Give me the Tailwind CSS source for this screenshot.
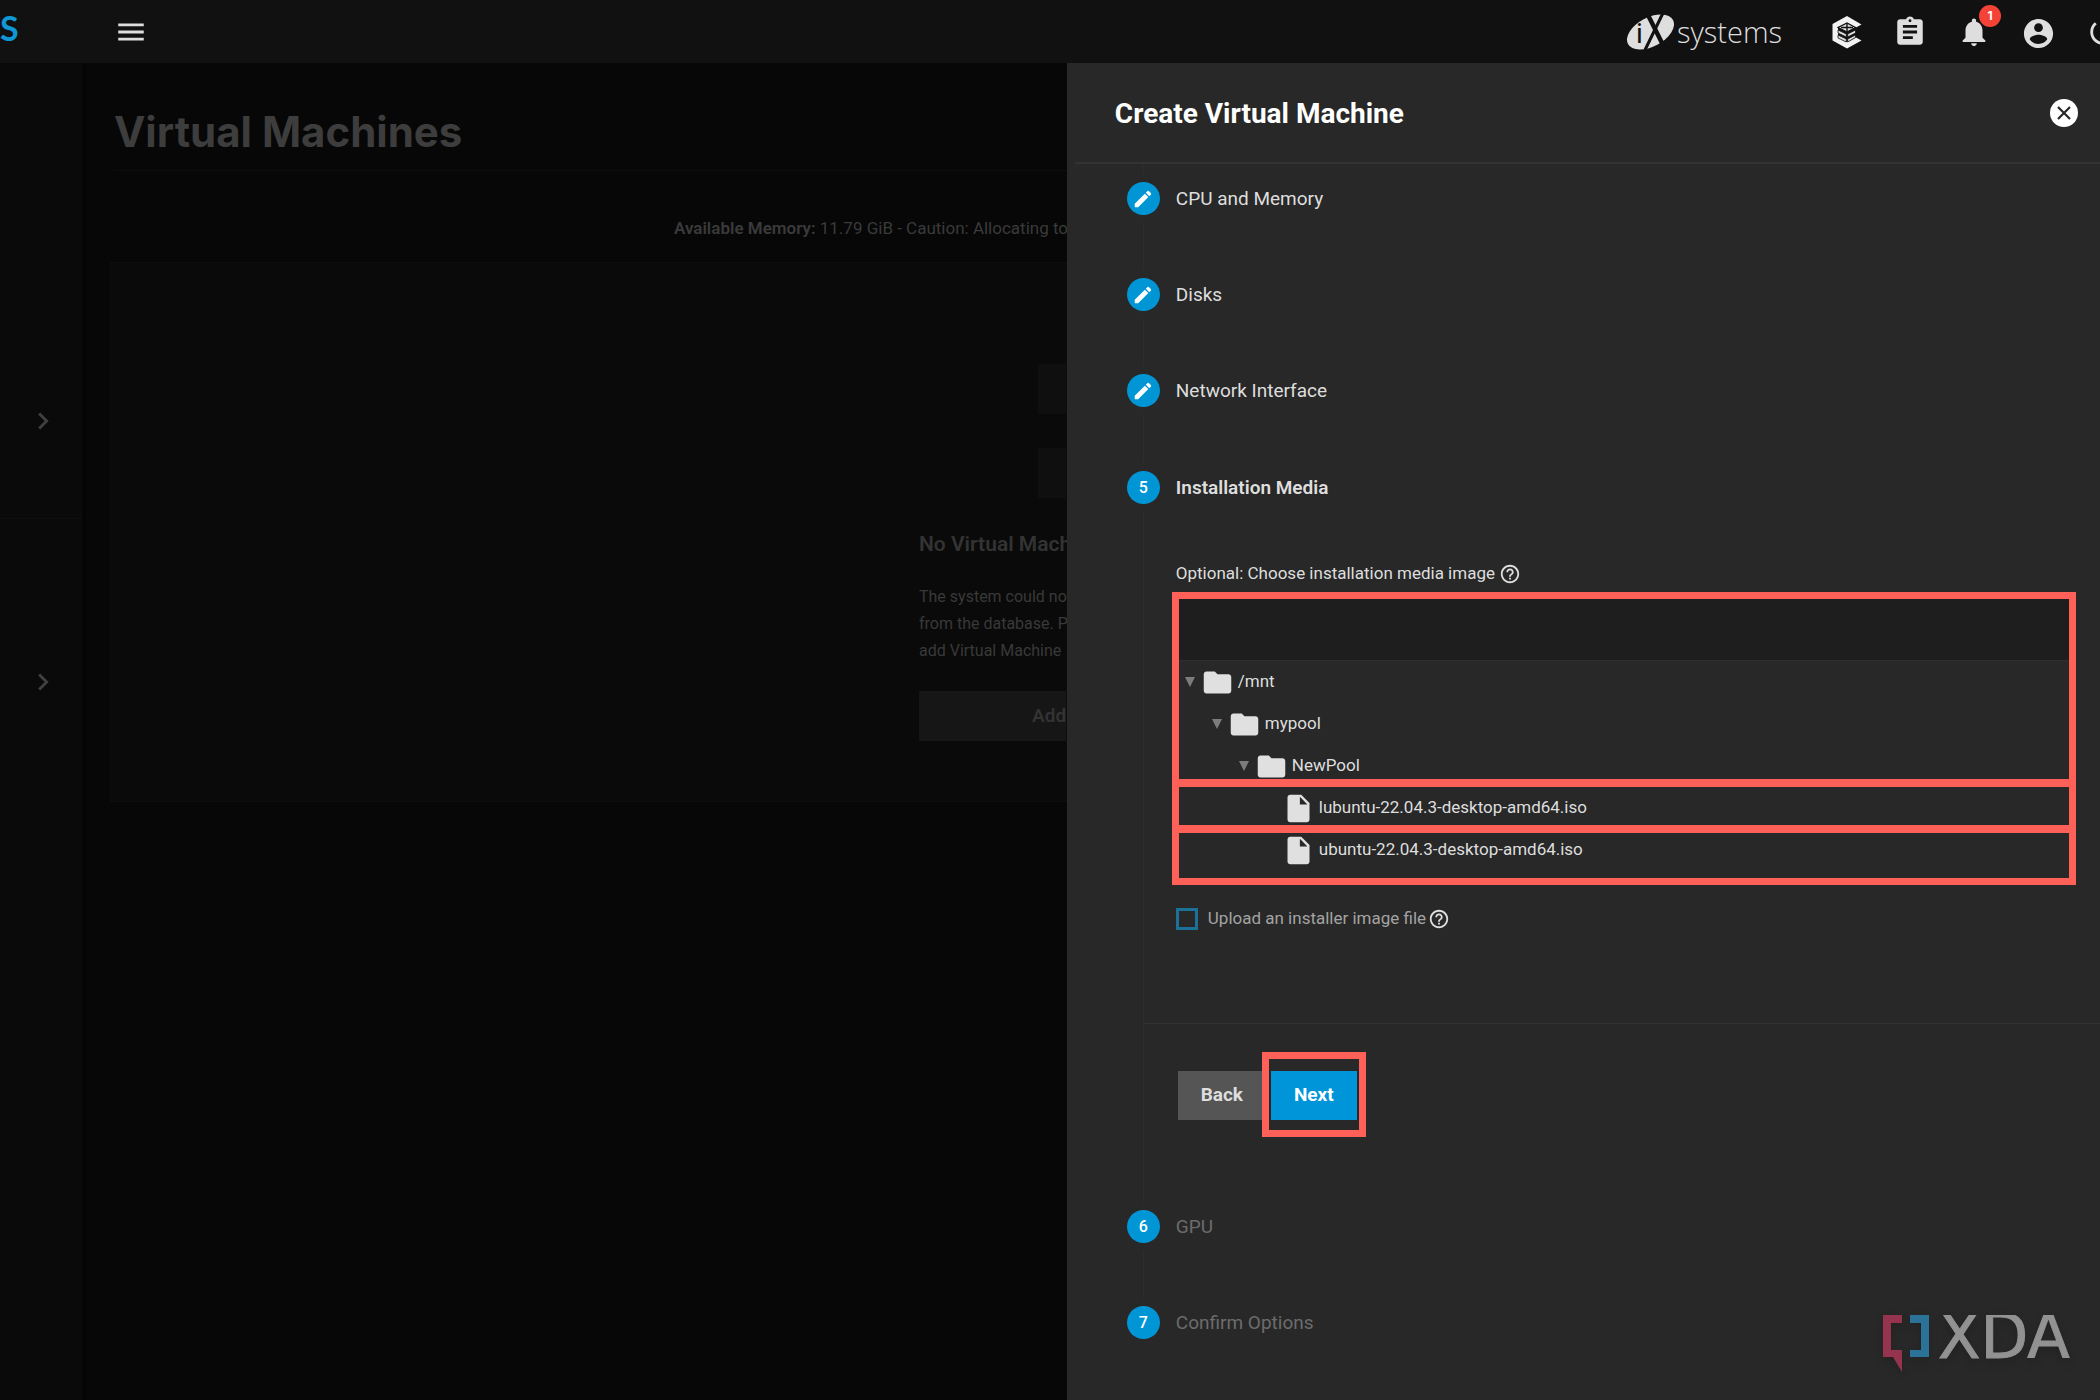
<!DOCTYPE html>
<html lang="en">
<head>
<meta charset="utf-8">
<title>Virtual Machines</title>
<meta name="viewport" content="width=device-width, initial-scale=1">
<script src="https://cdn.jsdelivr.net/npm/@tailwindcss/browser@4"></script>
</head>
<body class="flex min-h-screen flex-col overflow-x-hidden bg-[#070707] font-[Roboto,sans-serif] text-[17px] text-[#dedede]">

<!-- Top bar -->
<header class="flex h-[63px] items-center overflow-hidden bg-[#111111]">
  <a href="#" class="w-[114px] pb-2 font-[Lato,sans-serif] text-[34px] leading-none font-bold text-[#0f97d6]">S</a>
  <button type="button" aria-label="Toggle menu" class="text-[#dedede]">
    <svg class="size-[34px]" viewBox="0 0 24 24" fill="currentColor"><path d="M3 18h18v-2H3v2zm0-5h18v-2H3v2zm0-7v2h18V6H3z"/></svg>
  </button>
  <div class="-mr-5 ml-auto flex items-center gap-[30px] text-[#dedede]">
    <a href="#" aria-label="iXsystems" class="mr-4">
      <svg class="h-[44px] w-[160px]" viewBox="0 0 160 44">
        <ellipse cx="27.500" cy="22" rx="25.500" ry="14.500" transform="rotate(-28 27.500 22)" fill="#dedede"/>
        <text x="13" y="33" font-family="Roboto, sans-serif" font-size="28" fill="#111111">i</text>
        <path d="M24 3 L40 35" stroke="#111111" stroke-width="4.500" fill="none"/>
        <path d="M40 3 L22 40" stroke="#111111" stroke-width="3" fill="none"/>
        <text x="54" y="33" font-family="'Open Sans', sans-serif" font-weight="300" font-size="29" fill="#dedede">systems</text>
        <text x="155" y="20" font-family="Roboto, sans-serif" font-size="5" fill="#aaaaaa">™</text>
      </svg>
    </a>
    <button type="button" aria-label="TrueCommand">
      <svg class="size-[34px]" viewBox="0 0 34 34">
        <path d="M18 1 L32.500 9.500 L27 12.500 L18 8 L9 12 V22.500 L18 27 L27 22.500 L32.500 25.500 L18 33.500 L3.500 25.500 V9 Z" fill="#f2f2f2"/>
        <path d="M9 12.500 L18 8 L26.500 12.500 L18 17 Z" fill="#dedede" stroke="#111111" stroke-width="1.200"/>
        <path d="M18 8.500v8M12 12.500h12" stroke="#111111" stroke-width="1.400"/>
        <path d="M9 15 L17.300 19 V22 L9 18Z M9 20 L17.300 24 V27 L9 23Z M18.700 19 L26.500 15 V18 L18.700 22Z M18.700 24 L26.500 20 V22.500 L18.700 27Z" fill="#dedede" stroke="#111111" stroke-width=".8"/>
      </svg>
    </button>
    <button type="button" aria-label="Jobs">
      <svg class="size-[34px]" viewBox="0 0 24 24" fill="currentColor"><path d="M19 3h-4.180C14.400 1.840 13.300 1 12 1c-1.300 0-2.400.84-2.820 2H5c-1.100 0-2 .9-2 2v14c0 1.100.9 2 2 2h14c1.100 0 2-.9 2-2V5c0-1.100-.9-2-2-2zm-7 0c.55 0 1 .45 1 1s-.45 1-1 1-1-.45-1-1 .45-1 1-1zm2 14H7v-2h7v2zm3-4H7v-2h10v2zm0-4H7V7h10v2z"/></svg>
    </button>
    <button type="button" aria-label="Alerts" class="relative">
      <svg class="size-[34px]" viewBox="0 0 24 24" fill="currentColor"><path d="M12 22c1.100 0 2-.9 2-2h-4c0 1.100.89 2 2 2zm6-6v-5c0-3.070-1.640-5.640-4.500-6.320V4c0-.83-.67-1.500-1.500-1.500s-1.500.67-1.500 1.500v.68C7.630 5.360 6 7.920 6 11v5l-2 2v1h16v-1l-2-2z"/></svg>
      <span class="absolute -top-2.5 left-[22px] flex size-[22px] items-center justify-center rounded-full bg-[#f44336] font-[Inter,sans-serif] text-[12px] leading-none font-bold text-white">1</span>
    </button>
    <button type="button" aria-label="Account">
      <svg class="mt-1 size-[35px]" viewBox="0 0 24 24" fill="currentColor"><path d="M12 2C6.480 2 2 6.480 2 12s4.480 10 10 10 10-4.480 10-10S17.520 2 12 2zm0 3c1.660 0 3 1.340 3 3s-1.340 3-3 3-3-1.340-3-3 1.340-3 3-3zm0 14.200c-2.500 0-4.710-1.280-6-3.220.03-1.990 4-3.080 6-3.080 1.990 0 5.970 1.090 6 3.080-1.290 1.940-3.500 3.220-6 3.220z"/></svg>
    </button>
    <button type="button" aria-label="Power">
      <svg class="size-[34px]" viewBox="0 0 24 24" fill="currentColor"><path d="M13 3h-2v10h2V3zm4.830 2.170l-1.420 1.420C17.990 7.860 19 9.810 19 12c0 3.870-3.130 7-7 7s-7-3.130-7-7c0-2.190 1.010-4.140 2.580-5.420L6.170 5.170C4.230 6.820 3 9.260 3 12c0 4.970 4.030 9 9 9s9-4.030 9-9c0-2.740-1.230-5.180-3.170-6.830z"/></svg>
    </button>
  </div>
</header>

<div class="flex flex-1">
  <!-- Collapsed side navigation -->
  <nav aria-label="Main" class="w-[86px] shrink-0 border-r-4 border-[#050505] bg-[#0a0a0a] pt-[260px] text-[#404040]">
    <a href="#" aria-label="Expand section" class="flex h-[196px] items-center border-b border-[#0e0e0e] pl-[26px]">
      <svg class="size-[34px]" viewBox="0 0 24 24" fill="currentColor"><path d="M10 6L8.590 7.410 13.170 12l-4.580 4.590L10 18l6-6z"/></svg>
    </a>
    <a href="#" aria-label="Section" class="block h-[67px] border-b border-[#0c0c0c]"></a>
    <a href="#" aria-label="Section" class="block h-[64px] border-b border-[#0c0c0c]"></a>
    <a href="#" aria-label="Expand section" class="flex h-[64px] items-center pl-[26px]">
      <svg class="size-[34px]" viewBox="0 0 24 24" fill="currentColor"><path d="M10 6L8.590 7.410 13.170 12l-4.580 4.590L10 18l6-6z"/></svg>
    </a>
  </nav>

  <!-- Dimmed page behind the panel -->
  <main class="min-w-0 flex-1 overflow-hidden pl-6 whitespace-nowrap text-[#3a3a3a]">
    <h1 class="ml-1 h-[108px] border-b border-[#0d0d0d] pt-10 font-[Inter,sans-serif] text-[42px] leading-[58px] font-bold text-[#3d3d3d]">Virtual Machines</h1>
    <p class="mt-[45px] pl-[564px] leading-6"><b class="font-semibold">Available Memory:</b> 11.79 GiB - Caution: Allocating too</p>
    <section class="mt-[22px] flex h-[540px] flex-col border border-[#0d0d0d] bg-[#0a0a0a] pt-[101px] pl-[808px]">
      <div class="ml-[119px] h-[50px] bg-[#0f0f0f]"></div>
      <div class="mt-[34px] ml-[119px] h-[50px] bg-[#0f0f0f]"></div>
      <h2 class="mt-8 text-[21px] leading-7 font-semibold text-[#333333]">No Virtual Mach</h2>
      <p class="mt-[25px] text-base leading-[27px] text-[#393939]">The system could no<br>from the database. P<br>add Virtual Machine</p>
      <button type="button" class="mt-[27px] h-[50px] bg-[#161616] pl-[113px] text-left text-[19px] font-semibold text-[#333333]">Add</button>
    </section>
  </main>

  <!-- Create form -->
  <aside aria-labelledby="panel-title" class="relative w-[49.2%] shrink-0 bg-[#282828]">
    <div class="flex h-[99px] items-center pr-[22px] pl-12">
      <h2 id="panel-title" class="pt-0.5 text-[28px] leading-9 font-bold text-white">Create Virtual Machine</h2>
      <button type="button" aria-label="Close" class="ml-auto flex size-7 items-center justify-center rounded-full bg-white">
        <svg class="size-4" viewBox="0 0 16 16" fill="none" stroke="#282828" stroke-width="2.200"><path d="M2 2l12 12M14 2L2 14"/></svg>
      </button>
    </div>
    <form class="ml-2 border-t-2 border-[#333333]">
      <ol class="pl-[52px] text-[19px]">
        <li aria-hidden="true" class="mb-2 ml-4 h-[10px] w-px bg-[#2d2d2d]"></li>
        <li class="flex h-24 gap-4">
          <div class="flex w-[33px] flex-col items-center">
            <span class="flex size-[33px] shrink-0 items-center justify-center rounded-full bg-[#0095d5] text-white"><svg class="size-[22px]" viewBox="0 0 24 24" fill="currentColor"><path d="M3 17.250V21h3.750L17.810 9.940l-3.750-3.750L3 17.250zM20.710 7.040c.39-.39.39-1.020 0-1.410l-2.340-2.340c-.39-.39-1.020-.39-1.410 0l-1.830 1.830 3.750 3.750 1.830-1.830z"/></svg></span>
            <span class="my-2 w-px flex-1 bg-[#2d2d2d]"></span>
          </div>
          <h3 class="leading-[33px]">CPU and Memory</h3>
        </li>
        <li class="flex h-24 gap-4">
          <div class="flex w-[33px] flex-col items-center">
            <span class="flex size-[33px] shrink-0 items-center justify-center rounded-full bg-[#0095d5] text-white"><svg class="size-[22px]" viewBox="0 0 24 24" fill="currentColor"><path d="M3 17.250V21h3.750L17.810 9.940l-3.750-3.750L3 17.250zM20.710 7.040c.39-.39.39-1.020 0-1.410l-2.340-2.340c-.39-.39-1.020-.39-1.410 0l-1.830 1.830 3.750 3.750 1.830-1.830z"/></svg></span>
            <span class="my-2 w-px flex-1 bg-[#2d2d2d]"></span>
          </div>
          <h3 class="leading-[33px]">Disks</h3>
        </li>
        <li class="flex h-[97px] gap-4">
          <div class="flex w-[33px] flex-col items-center">
            <span class="flex size-[33px] shrink-0 items-center justify-center rounded-full bg-[#0095d5] text-white"><svg class="size-[22px]" viewBox="0 0 24 24" fill="currentColor"><path d="M3 17.250V21h3.750L17.810 9.940l-3.750-3.750L3 17.250zM20.710 7.040c.39-.39.39-1.020 0-1.410l-2.340-2.340c-.39-.39-1.020-.39-1.410 0l-1.830 1.830 3.750 3.750 1.830-1.830z"/></svg></span>
            <span class="my-2 w-px flex-1 bg-[#2d2d2d]"></span>
          </div>
          <h3 class="leading-[33px]">Network Interface</h3>
        </li>
        <li class="flex gap-4">
          <div class="flex w-[33px] flex-col items-center">
            <span class="flex size-[33px] shrink-0 items-center justify-center rounded-full bg-[#0095d5] text-base font-medium text-white">5</span>
            <span class="my-2 w-px flex-1 bg-[#2d2d2d]"></span>
          </div>
          <div class="min-w-0 flex-1 pb-[90px] text-[17px]">
            <h3 class="text-[19px] leading-[33px] font-semibold">Installation Media</h3>
            <div class="mt-[58px] flex h-6 items-center gap-1">
              <label for="media">Optional: Choose installation media image</label>
              <svg class="size-[22px]" viewBox="0 0 24 24" fill="currentColor"><path d="M11 18h2v-2h-2v2zm1-16C6.480 2 2 6.480 2 12s4.480 10 10 10 10-4.480 10-10S17.520 2 12 2zm0 18c-4.410 0-8-3.590-8-8s3.590-8 8-8 8 3.590 8 8-3.590 8-8 8zm0-14c-2.210 0-4 1.790-4 4h2c0-1.100.9-2 2-2s2 .9 2 2c0 2-3 1.750-3 5h2c0-2.250 3-2.500 3-5 0-2.210-1.790-4-4-4z"/></svg>
            </div>
            <div class="mt-1.5 mr-6 -ml-1 border-[7px] border-[#ff6057]">
              <input id="media" type="text" class="block h-[61px] w-full bg-[#1e1e1e] px-3 outline-none">
              <ul class="border-t border-[#2e2e2e] pb-[7px]">
                <li class="flex h-[42px] items-center pl-1.5">
                  <svg class="mr-1.5 size-2.5" viewBox="0 0 10 10" fill="#7c7c7c"><path d="M0 0h10L5 10z"/></svg>
                  <svg class="mr-1 size-[33px]" viewBox="0 0 24 24" fill="#e0e0e0"><path d="M10 4H4c-1.100 0-2 .9-2 2v12c0 1.100.9 2 2 2h16c1.100 0 2-.9 2-2V8c0-1.100-.9-2-2-2h-8l-2-2z"/></svg>/mnt
                </li>
                <li class="flex h-[42px] items-center pl-[33px]">
                  <svg class="mr-1.5 size-2.5" viewBox="0 0 10 10" fill="#7c7c7c"><path d="M0 0h10L5 10z"/></svg>
                  <svg class="mr-1 size-[33px]" viewBox="0 0 24 24" fill="#e0e0e0"><path d="M10 4H4c-1.100 0-2 .9-2 2v12c0 1.100.9 2 2 2h16c1.100 0 2-.9 2-2V8c0-1.100-.9-2-2-2h-8l-2-2z"/></svg>mypool
                </li>
                <li class="flex h-[42px] items-center pl-[60px]">
                  <svg class="mr-1.5 size-2.5" viewBox="0 0 10 10" fill="#7c7c7c"><path d="M0 0h10L5 10z"/></svg>
                  <svg class="mr-1 size-[33px]" viewBox="0 0 24 24" fill="#e0e0e0"><path d="M10 4H4c-1.100 0-2 .9-2 2v12c0 1.100.9 2 2 2h16c1.100 0 2-.9 2-2V8c0-1.100-.9-2-2-2h-8l-2-2z"/></svg>NewPool
                </li>
                <li class="relative flex h-[42px] items-center pl-[103px]">
                  <span aria-hidden="true" class="absolute -inset-x-[7px] -top-2 -bottom-1 border-x-[7px] border-y-[8px] border-[#ff6057]"></span>
                  <svg class="mr-1 size-[33px]" viewBox="0 0 24 24" fill="#e0e0e0"><path d="M6 2c-1.100 0-1.990.9-1.990 2L4 20c0 1.100.89 2 1.990 2H18c1.100 0 2-.9 2-2V8l-6-6H6zm7 7V3.500L18.500 9H13z"/></svg>lubuntu-22.04.3-desktop-amd64.iso
                </li>
                <li class="flex h-[42px] items-center pl-[103px]">
                  <svg class="mr-1 size-[33px]" viewBox="0 0 24 24" fill="#e0e0e0"><path d="M6 2c-1.100 0-1.990.9-1.990 2L4 20c0 1.100.89 2 1.990 2H18c1.100 0 2-.9 2-2V8l-6-6H6zm7 7V3.500L18.500 9H13z"/></svg>ubuntu-22.04.3-desktop-amd64.iso
                </li>
              </ul>
            </div>
            <div class="mt-[22px] flex h-6 items-center">
              <input id="upload" type="checkbox" class="size-[22px] appearance-none border-[3px] border-[#1b7197]">
              <label for="upload" class="mr-0.5 ml-2.5 text-[#a3a3a3]">Upload an installer image file</label>
              <svg class="size-[22px]" viewBox="0 0 24 24" fill="currentColor"><path d="M11 18h2v-2h-2v2zm1-16C6.480 2 2 6.480 2 12s4.480 10 10 10 10-4.480 10-10S17.520 2 12 2zm0 18c-4.410 0-8-3.590-8-8s3.590-8 8-8 8 3.590 8 8-3.590 8-8 8zm0-14c-2.210 0-4 1.790-4 4h2c0-1.100.9-2 2-2s2 .9 2 2c0 2-3 1.750-3 5h2c0-2.250 3-2.500 3-5 0-2.210-1.790-4-4-4z"/></svg>
            </div>
            <div class="mt-[92px] -ml-8 flex gap-[5px] border-t border-[#333333] pt-[47px] pl-[34px] text-[19px] font-bold">
              <button type="button" class="h-[49px] w-[88px] bg-[#555555]">Back</button>
              <div class="relative">
                <button type="button" class="h-[49px] w-[86px] bg-[#0095d9] text-white">Next</button>
                <span aria-hidden="true" class="absolute -inset-x-[9px] -top-[19px] -bottom-[17px] border-[7px] border-[#ff6057]"></span>
              </div>
            </div>
          </div>
        </li>
        <li class="flex h-24 gap-4 text-[#6c6c6c]">
          <div class="flex w-[33px] flex-col items-center">
            <span class="flex size-[33px] shrink-0 items-center justify-center rounded-full bg-[#0095d5] text-base font-medium text-white">6</span>
            <span class="my-2 w-px flex-1 bg-[#2d2d2d]"></span>
          </div>
          <h3 class="leading-[33px]">GPU</h3>
        </li>
        <li class="flex gap-4 text-[#6c6c6c]">
          <span class="flex size-[33px] shrink-0 items-center justify-center rounded-full bg-[#0095d5] text-base font-medium text-white">7</span>
          <h3 class="leading-[33px]">Confirm Options</h3>
        </li>
      </ol>
    </form>
    <!-- Watermark -->
    <svg class="absolute right-6 bottom-7 h-[57px] w-[193px] drop-shadow-lg" viewBox="0 0 193 57" role="img" aria-label="XDA">
      <path d="M0 0H19V8H8V35H19V57L10 42H0Z" fill="#96344f"/>
      <path d="M27 0H46V42H27V35H38V8H27Z" fill="#2b7299"/>
      <text x="55" y="43" font-family="'DejaVu Sans', sans-serif" font-size="62" fill="#929292" stroke="#929292" stroke-width="1">XDA</text>
    </svg>
  </aside>
</div>
</body>
</html>
